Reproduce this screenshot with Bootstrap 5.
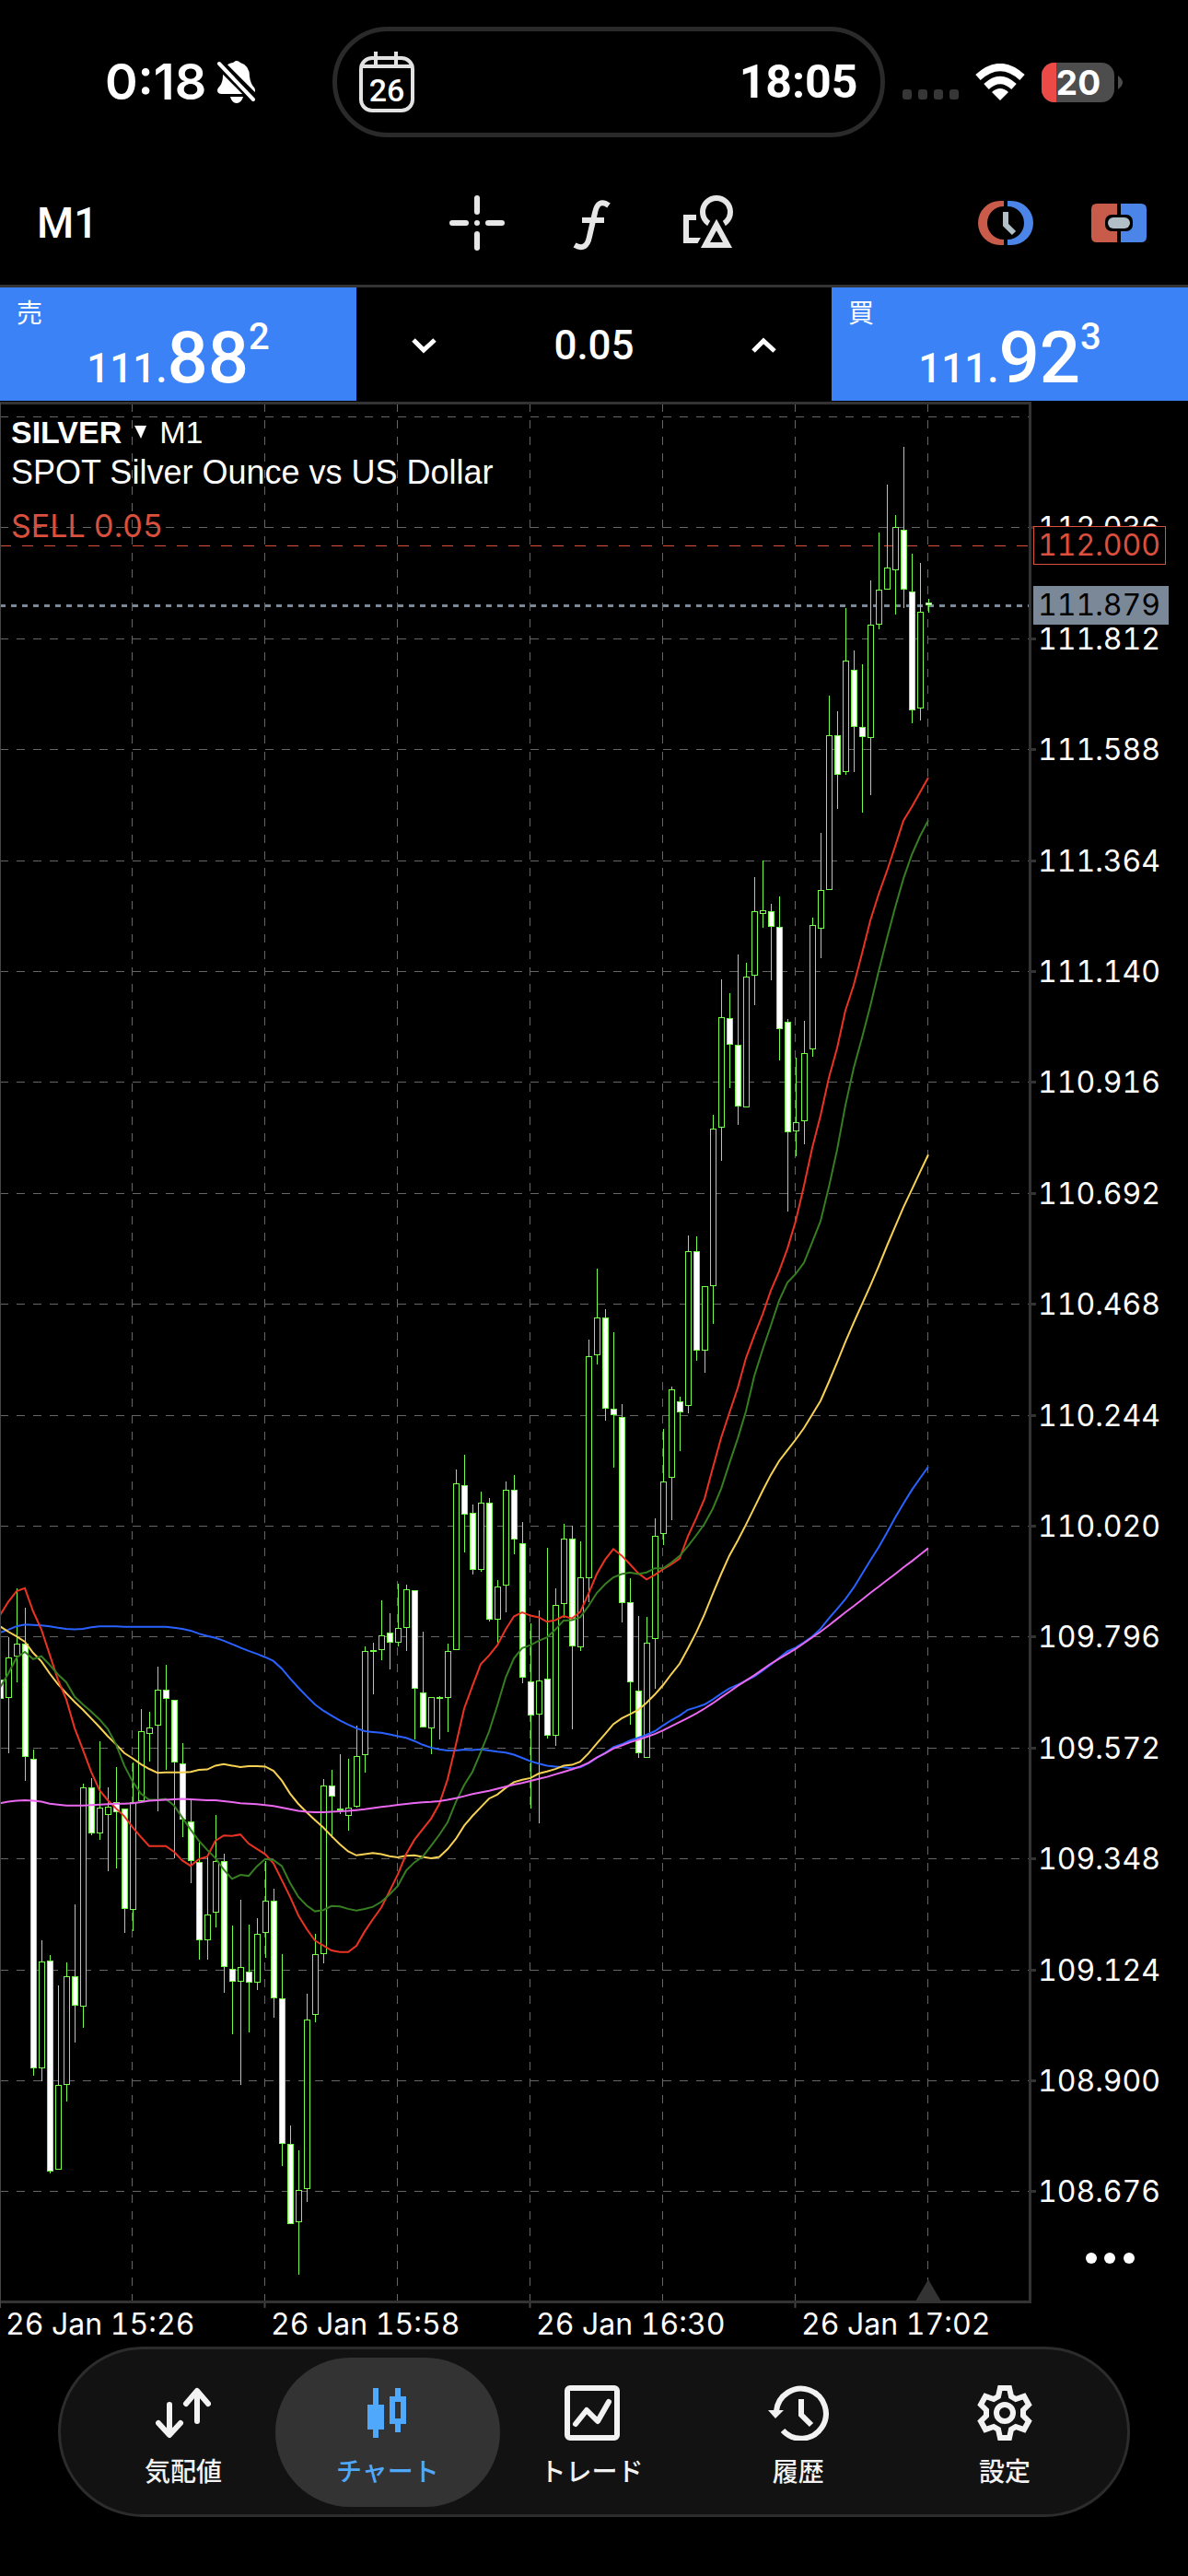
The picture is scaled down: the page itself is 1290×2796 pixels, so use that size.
<!DOCTYPE html>
<html lang="ja" data-bs-theme="dark">
<head>
<meta charset="utf-8">
<meta name="viewport" content="width=device-width, initial-scale=1">
<title>SILVER M1</title>
<link href="https://cdn.jsdelivr.net/npm/bootstrap@5.3.0/dist/css/bootstrap.min.css" rel="stylesheet">
<style>
  body { background: #000; color: #fff; font-family: Inter, "Noto Sans CJK JP", sans-serif; }
  .din { font-family: Roboto, sans-serif; font-weight: 500; }
  svg { display: block; flex-shrink: 0; }
  .status { height: 178px; padding: 29px 70px 29px 114px; }
  .clock { font-size: 54px; font-weight: 600; line-height: 60px; }
  .status-side { height: 120px; flex: 1 1 0; }
  .status-left { gap: 12px; }
  .status-right { gap: 18px; }
  .signal { margin-top: 28px; }
  .island { height: 120px; flex: 0 0 600px; margin-right: 13px; border: 5px solid #2a2a2a; border-radius: 60px; padding: 0 24px; }
  .island-time { font-size: 50px; line-height: 60px; font-weight: 700; }
  .tools { height: 134px; border-bottom: 3px solid #333; padding: 0 45px 4px 40px; }
  .tools .btn { border: 0; padding: 0; color: #e6e6e6; border-radius: 0; }
  .tools-end { flex: 1 1 0; }
  .tools-mid { gap: 65px; }
  .tools-right { gap: 63px; }
  .frame { font-size: 46px; line-height: 60px; }
  .ticket { height: 123px; }
  .quote { width: 30%; border: 0; background: #3b82f6; color: #fff; padding: 12px 18px 8px; }
  .side-name { font-size: 28px; line-height: 32px; }
  .price { line-height: 66px; }
  .p-int { font-size: 44px; }
  .p-big { font-size: 78px; }
  .p-sup { font-size: 40px; line-height: 20px; }
  .lot-row { padding: 2px 44px 0; }
  .lot { width: 140px; border: 0; background: none; color: #fff; text-align: center; font: 500 44px/60px Roboto, sans-serif; padding: 0; }
  .step { border: 0; padding: 16px; color: #fff; }
  .legend-box { top: 12px; left: 12px; font: 36px/44px "Liberation Sans", sans-serif; }
  .legend-top { gap: 14px; font-size: 34px; }
  .sell-tag { top: 118px; left: 12px; font-size: 34px; line-height: 36px; color: #db4f3d; }
  .sell-tag, .chart text { font-variant-numeric: tabular-nums; }
  .more { right: 42px; bottom: 74px; border: 0; padding: 16px; }
  .chart text { font-family: Inter, sans-serif; font-size: 32px; fill: #fff; }
  .chart .order { fill: #db4f3d; }
  .chart .bid { fill: #000; }
  .dock { height: 185px; margin: 0 63px 64px; padding: 0 21px; border: 3px solid #2c2c2c; border-radius: 93px; background: #121212; }
  .dock a { height: 162px; border-radius: 81px; color: #f2f2f2; text-decoration: none; font: 500 28px/36px "Noto Sans CJK JP", sans-serif; padding: 8px 0 0; gap: 14px; }
  .dock a.active { background: #333; color: #4fa8fb; margin: 0 -12px; padding: 8px 12px 0; }
</style>
<script src="https://cdn.jsdelivr.net/npm/bootstrap@5.3.0/dist/js/bootstrap.bundle.min.js"></script>
</head>
<body>
<header>
  <div class="status d-flex align-items-center">
    <div class="status-side status-left d-flex align-items-center">
      <span class="clock">0:18</span>
      <svg width="42" height="48" viewBox="0 0 42 48" fill="#fff" aria-hidden="true">
        <path d="M5 37Q0 37 0 33Q0 31 3 28Q6 24 6 17Q7 4 17 3Q21-1 25 3Q35 6 35 18Q36 26 40 30Q42 33 40 37Z"/>
        <path d="M14 40H28Q26 47 21 47Q16 47 14 40Z"/>
        <path d="M0 2L41 43" stroke="#000" stroke-width="11"/>
        <path d="M2 4L39 43" stroke="#fff" stroke-width="4" stroke-linecap="round"/>
      </svg>
    </div>
    <div class="island d-flex align-items-center justify-content-between">
      <svg width="60" height="66" viewBox="0 0 60 66" aria-hidden="true">
        <g fill="none" stroke="#e2e2e2" stroke-width="4"><rect x="2" y="7" width="56" height="57" rx="12"/><path d="M3 16H57M18 0V16M40 0V16"/></g>
        <text class="din" x="30" y="54" font-size="34" fill="#fff" text-anchor="middle">26</text>
      </svg>
      <span class="island-time din">18:05</span>
    </div>
    <div class="status-side status-right d-flex align-items-center justify-content-end">
      <svg class="signal" width="61" height="12" viewBox="0 0 61 12" fill="#363636" aria-hidden="true"><rect width="10" height="11" rx="3"/><rect x="17" width="10" height="11" rx="3"/><rect x="34" width="10" height="11" rx="3"/><rect x="51" width="10" height="11" rx="3"/></svg>
      <svg width="54" height="41" viewBox="0 0 54 41" fill="none" stroke="#fff" stroke-width="8" aria-hidden="true"><path d="M3 15Q27-7 51 15M12 25Q27 11 42 25"/><path d="M27 40L18 31Q27 23 36 31Z" fill="#fff" stroke="none"/></svg>
      <svg width="89" height="43" viewBox="0 0 89 43" aria-label="20%">
        <rect width="79" height="43" rx="14" fill="#4d4d4d"/><path d="M16 0H14A14 14 0 0 0 0 14V29A14 14 0 0 0 14 43H16Z" fill="#ec4a47"/><path d="M83 14Q88 18 88 21.500Q88 25 83 29Z" fill="#4d4d4d"/>
        <text x="40" y="35" font-size="37" font-weight="700" fill="#fff" text-anchor="middle">20</text>
      </svg>
    </div>
  </div>
  <div class="tools d-flex align-items-center">
    <button class="btn frame din tools-end text-white text-start">M1</button>
    <div class="tools-mid d-flex align-items-center">
      <button class="btn" aria-label="十字線"><svg width="60" height="60" viewBox="0 0 60 60" stroke="currentColor" stroke-width="6" stroke-linecap="round"><path d="M30 3V18M30 42V57M3 30H18M42 30H57M30 30h0"/></svg></button>
      <button class="btn" aria-label="インディケータ"><svg width="60" height="60" viewBox="0 0 60 60" fill="none" stroke="currentColor" stroke-width="6"><path d="M48 11C40 5 35 9 33 19L27 45C25 55 20 59 11 54M19 27H43"/></svg></button>
      <button class="btn" aria-label="オブジェクト"><svg width="60" height="60" viewBox="0 0 60 60" fill="none" stroke="currentColor" stroke-width="6"><path d="M18 24H7V49H23"/><circle cx="40" cy="18" r="15"/><path d="M40 32L27 55H53Z" stroke="#000" stroke-width="16"/><path d="M40 32L28 54H52Z"/></svg></button>
    </div>
    <div class="tools-end tools-right d-flex align-items-center justify-content-end">
      <button class="btn" aria-label="取引時間"><svg width="60" height="48" viewBox="0 0 60 48"><path d="M28 0H24A24 24 0 0 0 24 48H28V42A18 18 0 0 1 28 6Z" fill="#c95b4b"/><path d="M32 0H36A24 24 0 0 1 36 48H32V42A18 18 0 0 0 32 6Z" fill="#4b85e8"/><path d="M30 12V26L39 35" fill="none" stroke="#b3bfc6" stroke-width="6"/></svg></button>
      <button class="btn" aria-label="ワンクリック取引"><svg width="60" height="42" viewBox="0 0 60 42"><path d="M28 0H6Q0 0 0 6V36Q0 42 6 42H28Z" fill="#c95b4b"/><path d="M32 0H54Q60 0 60 6V36Q60 42 54 42H32Z" fill="#4b85e8"/><rect x="15" y="12" width="30" height="18" rx="7" fill="#000"/><rect x="18" y="15" width="24" height="12" rx="6" fill="#b3bfc6"/></svg></button>
    </div>
  </div>
  <div class="ticket d-flex">
    <button class="quote d-flex flex-column align-items-start">
      <span class="side-name">売</span>
      <span class="price din align-self-center d-flex align-items-baseline"><span class="p-int">111.</span><span class="p-big">88</span><span class="p-sup align-self-start">2</span></span>
    </button>
    <div class="lot-row flex-fill d-flex align-items-center justify-content-between">
      <button class="btn step" aria-label="減らす"><svg width="27" height="18" viewBox="0 0 27 18" fill="none" stroke="#fff" stroke-width="5"><path d="M2 3L13 14L25 3"/></svg></button>
      <input class="lot" type="text" value="0.05" aria-label="ロット">
      <button class="btn step" aria-label="増やす"><svg width="27" height="18" viewBox="0 0 27 18" fill="none" stroke="#fff" stroke-width="5"><path d="M2 15L13 4L25 15"/></svg></button>
    </div>
    <button class="quote d-flex flex-column align-items-start">
      <span class="side-name">買</span>
      <span class="price din align-self-center d-flex align-items-baseline"><span class="p-int">111.</span><span class="p-big">92</span><span class="p-sup align-self-start">3</span></span>
    </button>
  </div>
</header>
<main class="position-relative">
  <svg id="chart" class="chart w-100 h-auto" viewBox="0 435 1290 2112" role="img" aria-label="SILVER M1"></svg>
  <div class="legend-box position-absolute">
    <div class="legend-top d-flex align-items-center"><b>SILVER</b><svg width="13" height="16" viewBox="0 0 13 16"><path d="M0 1H13L7 15Z" fill="#fff"/></svg><span>M1</span></div>
    <div>SPOT Silver Ounce vs US Dollar</div>
  </div>
  <div class="sell-tag position-absolute">SELL 0.05</div>
  <button class="btn more position-absolute" aria-label="その他"><svg width="53" height="12" viewBox="0 0 53 12" fill="#fff"><circle cx="6" cy="6" r="6"/><circle cx="26" cy="6" r="6"/><circle cx="47" cy="6" r="6"/></svg></button>
</main>
<nav class="dock d-flex align-items-center">
  <a href="#" class="flex-fill d-flex flex-column align-items-center justify-content-center w-100"><svg width="60" height="60" viewBox="0 0 60 60" fill="none" stroke="currentColor" stroke-width="6" stroke-linecap="round" stroke-linejoin="round"><path d="M15 21V53M3 41L15 54L27 41M45 39V7M33 20L45 6L57 20"/></svg><span>気配値</span></a>
  <a href="#" class="active flex-fill d-flex flex-column align-items-center justify-content-center w-100" aria-current="page"><svg width="60" height="60" viewBox="0 0 60 60" fill="currentColor"><path d="M14 3H20V21H26V48H20V57H14V48H8V21H14ZM38 3H44V12H50V42H44V51H38V42H32V12H38ZM38 18V36H44V18Z" fill-rule="evenodd"/></svg><span>チャート</span></a>
  <a href="#" class="flex-fill d-flex flex-column align-items-center justify-content-center w-100"><svg width="60" height="60" viewBox="0 0 60 60" fill="none" stroke="currentColor" stroke-width="6"><rect x="3" y="3" width="54" height="54" rx="3"/><path d="M12 42L24 27L36 39L48 18" stroke-linecap="round" stroke-linejoin="round"/></svg><span>トレード</span></a>
  <a href="#" class="flex-fill d-flex flex-column align-items-center justify-content-center w-100"><svg width="66" height="60" viewBox="0 0 66 60" fill="none" stroke="currentColor" stroke-width="6"><path d="M9 28A27 27 0 1 1 16 49M36 15V32L47 43"/><path d="M0 27H17L8 36Z" fill="currentColor" stroke="none"/></svg><span>履歴</span></a>
  <a href="#" class="flex-fill d-flex flex-column align-items-center justify-content-center w-100"><svg width="60" height="60" viewBox="0 0 60 60" fill="none" stroke="currentColor" stroke-width="6"><path d="M25 3H35L37 12L42 15L51 12L56 21L50 27V33L56 39L51 48L42 45L37 48L35 57H25L23 48L18 45L9 48L4 39L10 33V27L4 21L9 12L18 15L23 12Z"/><circle cx="30" cy="30" r="9"/></svg><span>設定</span></a>
</nav>
<script>
// Each block: y origin, units per pixel, first bar index, data.
// Bar: [type, high, body top, body bottom, low]; u = hollow, d = filled.
const bars = [
  [1680, 1.9122, 0, `d 273 273 313 313,u 185 227 311 426,u 84 198 225 279,d 124 198 435 484,d 419 437 1081 1096,u 815 858 1081 1107,d 845 856 1294 1298,u 908 1114 1290 1290,u 860 890 1114 1149,d 740 890 951 1027,u 490 498 953 996,d 478 498 592 597,u 402 540 592 606,u 497 538 554 671,d 455 527 548 665,d 542 542 750 799,u 446 527 751 795,u 335 381 525 527,u 340 372 387 444,u 247 295 370 547,d 243 295 313 461,d 315 315 445 644,d 405 447 565 600,d 523 567 651 696,d 611 653 814 855,u 641 762 814 855,u 555 651 758 788,d 635 651 871 924,d 784 873 900 1010,u 730 871 900 1115,d 782 879 903 1006,u 769 802 903 918,u 650 733 800 851,d 708 733 936 975,d 843 936 1238 1283,d 1199 1238 1403 1403,u 1251 1332 1399 1509`],
  [1500, 2.24, 37, `u 1487 1549 1962 1994,u 1342 1392 1538 1557,u 965 980 1390 1413,d 943 982 1007 1109,d 905 1038 1042 1051,u 916 1034 1054 1091,u 836 910 1032 1034,u 643 655 908 950,u 634 653 653 759,u 531 617 651 676,d 562 610 633 699,u 491 597 635 643,u 493 503 599 654,d 507 507 747 869,d 607 754 841 841,u 767 767 843 905,d 764 767 769 869,u 636 655 769 851,u 213 247 651 651,d 177 250 322 414,d 298 319 458 468,u 267 294 458 461,d 282 294 577 582,u 482 498 577 635,u 242 263 496 560,d 226 263 382 419,d 340 391 720 732,d 587 729 810 1037,u 556 725 808 1073,d 403 722 861 867,u 502 541 861 885,u 345 380 539 573,d 349 380 642 844`],
  [1300, 2.24, 70, `u 836 922 1094 1102,u 345 386 924 983,u 172 292 382 405,d 271 292 512 542,d 327 514 528 656,d 502 532 985 1033,d 925 984 1179 1281,d 1017 1199 1350 1362,u 1019 1081 1363 1363,u 780 821 1074 1194,u 562 689 817 844,u 459 465 682 784,d 484 494 521 616,u 92 129 507 524,d 94 131 371 396,u 216 216 371 426`],
  [860, 2.8, 86, `u 980 1023 1500 1616,u 568 684 1018 1120,d 610 687 766 899,d 493 768 954 1011,u 518 561 957 957,u 258 362 556 647,u 207 359 369 412,d 339 362 408 571,d 316 410 719 815,d 689 698 1032 1274,u 806 1001 1029 1106,u 694 793 999 1070,u 381 404 780 804,u 123 298 413 504`],
  [430, 3, 100, `u 975 1105 1609 1609,d 1026 1105 1232 1344,u 690 862 1223 1233,d 828 892 1076 1224,d 873 1078 1109 1356,u 600 745 1112 1299,u 444 631 743 759,u 288 559 629 629,u 387 427 566 711,d 165 436 629 690,d 513 637 1022 1065,u 543 703 1016 1056,d 660 673 681 705`]
];
// Moving averages: one value per bar, same block scheme.
const averages = {
  '#2962ff': [
    [1680, 1.9122, 0, '176 170 163 159 160 161 163 166 168 169 168 165 163 163 163 164 164 164 164 164 164 166 168 172 178 183 187 193 200 207 214 220 227 235'],
    [1500, 2.24, 34, '697 721 743 764 784 799 811 823 833 842 849 851 853 857 861 865 873 882 889 893 896 896 894 895 893 896 899 901 906 914 922 928 933 935 937 939'],
    [1300, 2.24, 70, '1385 1375 1362 1350 1336 1329 1320 1313 1306 1297 1283 1270 1259 1245 1239 1232 1220 1206 1193 1184 1174 1164 1150 1135 1119 1103 1094 1081 1067 1048 1023 1000 976 948 915 882 850 815 778 744 711 682 654']],
  '#f7d154': [
    [1680, 1.9122, 0, '163 174 184 195 218 236 261 283 302 320 336 354 372 391 408 426 437 449 459 467 466 466 466 465 461 460 452 449 452 455 453 453 454 463'],
    [1500, 2.24, 34, '969 1001 1026 1046 1065 1083 1104 1124 1141 1151 1148 1145 1148 1153 1156 1152 1151 1155 1158 1155 1136 1111 1079 1055 1034 1013 1003 987 973 967 963 952 947 941 933 931'],
    [1300, 2.24, 70, '1371 1351 1327 1304 1280 1266 1256 1245 1228 1208 1185 1158 1133 1096 1057 1013 963 915 870 834 795 754 713 674 640 614 588 560 527 494 448 400 350 304'],
    [860, 2.8, 104, '1556 1500 1441 1379 1320 1261 1208 1154 1101']],
  '#ea3323': [
    [1680, 1.9122, 0, '140 112 90 84 132 170 222 274 315 374 419 465 503 524 541 557 580 600 619 619 619 631 649 660 646 641 608 597 598 595 614 625 636 655'],
    [1500, 2.24, 34, '1211 1252 1297 1330 1358 1370 1382 1386 1386 1371 1336 1306 1278 1238 1197 1148 1113 1087 1062 1026 966 882 794 739 686 665 640 602 570 560 568 572 583 579 569 575'],
    [1300, 2.24, 70, '1007 963 915 880 854 870 891 913 928 917 903 891 877 823 779 732 657 584 523 463 390 335 284 226 179 124'],
    [860, 2.8, 96, '1303 1196 1080 982 868 777 663 586 490 390 310 240 164 86'],
    [430, 3, 110, '1338 1290 1242']],
  '#377d22': [
    [1680, 1.9122, 0, '290 261 228 216 231 225 243 263 279 309 325 340 356 376 408 452 485 510 523 523 521 535 560 585 608 627 644 668 687 679 681 661 646 648'],
    [1500, 2.24, 34, '1177 1218 1252 1273 1287 1284 1274 1275 1281 1285 1281 1276 1264 1246 1225 1188 1168 1154 1128 1101 1071 1021 980 948 900 850 787 719 672 647 640 629 621 602 580 579'],
    [1300, 2.24, 70, '1020 993 961 940 923 915 911 915 911 901 901 887 871 847 821 793 756 708 646 586 519 434 370 311 250 206 185 158 108'],
    [860, 2.8, 99, '1303 1200 1086 951 838 746 650 545 445 350 262 190 133 85']],
  '#ea68f0': [
    [1680, 1.9122, 0, '530 527 525 524 525 527 531 533 535 535 535 534 533 532 531 531 530 528 525 524 523 522 521 522 523 524 524 526 528 530 531 532 534 536'],
    [1500, 2.24, 34, '1035 1039 1043 1045 1046 1046 1045 1044 1043 1041 1039 1036 1033 1031 1028 1026 1024 1022 1021 1019 1016 1012 1007 1002 998 994 989 984 979 975 970 965 960 954 948 942'],
    [1300, 2.24, 70, '1383 1374 1361 1351 1339 1332 1324 1318 1311 1304 1295 1285 1275 1265 1254 1242 1229 1215 1201 1187 1174 1161 1147 1133 1121 1109 1097 1083 1069 1055 1040 1024 1008 993 977 961 946 930 915 899 884 868 852']]
};
const PITCH = 9, RIGHT = 1118, TOP = 438, BOTTOM = 2499, CENTER = 0.5;
const out = [];
const rowY = i => Math.round(452 + i * 120.4) + CENTER;

// Grid
for (let i = 0; i < 17; i++) out.push(`<path d="M0 ${rowY(i)}H${RIGHT}" stroke="#666" stroke-dasharray="9 9"/>`);
for (let x = 144; x < RIGHT; x += 144) out.push(`<path d="M${x - CENTER} ${TOP}V${BOTTOM}" stroke="#666" stroke-dasharray="9 9"/>`);
// Order and bid levels
out.push(`<path d="M0 592.5H${RIGHT}" stroke="#db4f3d" stroke-dasharray="12 12"/>`);
out.push(`<path d="M0 657.5H${RIGHT}" stroke="#7b8897" stroke-width="3" stroke-dasharray="6 6"/>`);
// Candles
for (const [y0, k, first, data] of bars) {
  data.split(',').forEach((row, i) => {
    const [type, ...v] = row.split(' ');
    const [hi, a, b, lo] = v.map(n => Math.round(y0 + n / k));
    const x = (first + i) * PITCH, top = Math.min(a, b - 1) + CENTER, h = Math.max(b - a - 1, 1);
    out.push(`<path d="M${x + CENTER} ${hi}V${a}M${x + CENTER} ${b}V${lo}" stroke="#75fb4c"/>`);
    out.push(`<rect x="${x - 3 + CENTER}" y="${top}" width="6" height="${h}" stroke="#75fb4c" fill="${type === 'u' ? '#000' : '#fff'}"/>`);
  });
}
// Averages
for (const [color, blocks] of Object.entries(averages)) {
  const pts = blocks.flatMap(([y0, k, first, data]) =>
    data.split(' ').map((n, i) => `${(first + i) * PITCH},${(y0 + n / k).toFixed(1)}`));
  out.push(`<polyline points="${pts.join(' ')}" fill="none" stroke="${color}" stroke-width="2"/>`);
}
// Frame, ticks, last-bar marker
out.push(`<path d="M0 437.5H1118.500V2498.500H0" fill="none" stroke="#333" stroke-width="3"/><path d="M0.5 437V2505" stroke="#444"/>`);
out.push('<path d="M994 2498L1008 2474L1022 2498Z" fill="#333"/>');
for (const x of [287, 575, 863]) out.push(`<path d="M${x + CENTER} 2500V2505" stroke="#444" stroke-width="2"/>`);
// Axis labels
for (let i = 1; i < 17; i++) {
  out.push(`<path d="M1120 ${rowY(i)}H1125" stroke="#333" stroke-width="3"/>`);
  out.push(`<text x="1127" y="${Math.round(rowY(i)) + 11}">${(112.036 - (i - 1) * 0.224).toFixed(3)}</text>`);
}
['15:26', '15:58', '16:30', '17:02'].forEach((t, i) => out.push(`<text x="${6 + i * 288}" y="2534">26 Jan ${t}</text>`));
out.push('<rect x="1122.5" y="571.5" width="143" height="41" fill="#000" stroke="#db4f3d"/><text class="order" x="1127" y="603">112.000</text>');
out.push('<rect x="1122" y="636" width="147" height="42" fill="#7b8897"/><text class="bid" x="1127" y="668">111.879</text>');
document.getElementById('chart').innerHTML = out.join('');
</script>
</body>
</html>
